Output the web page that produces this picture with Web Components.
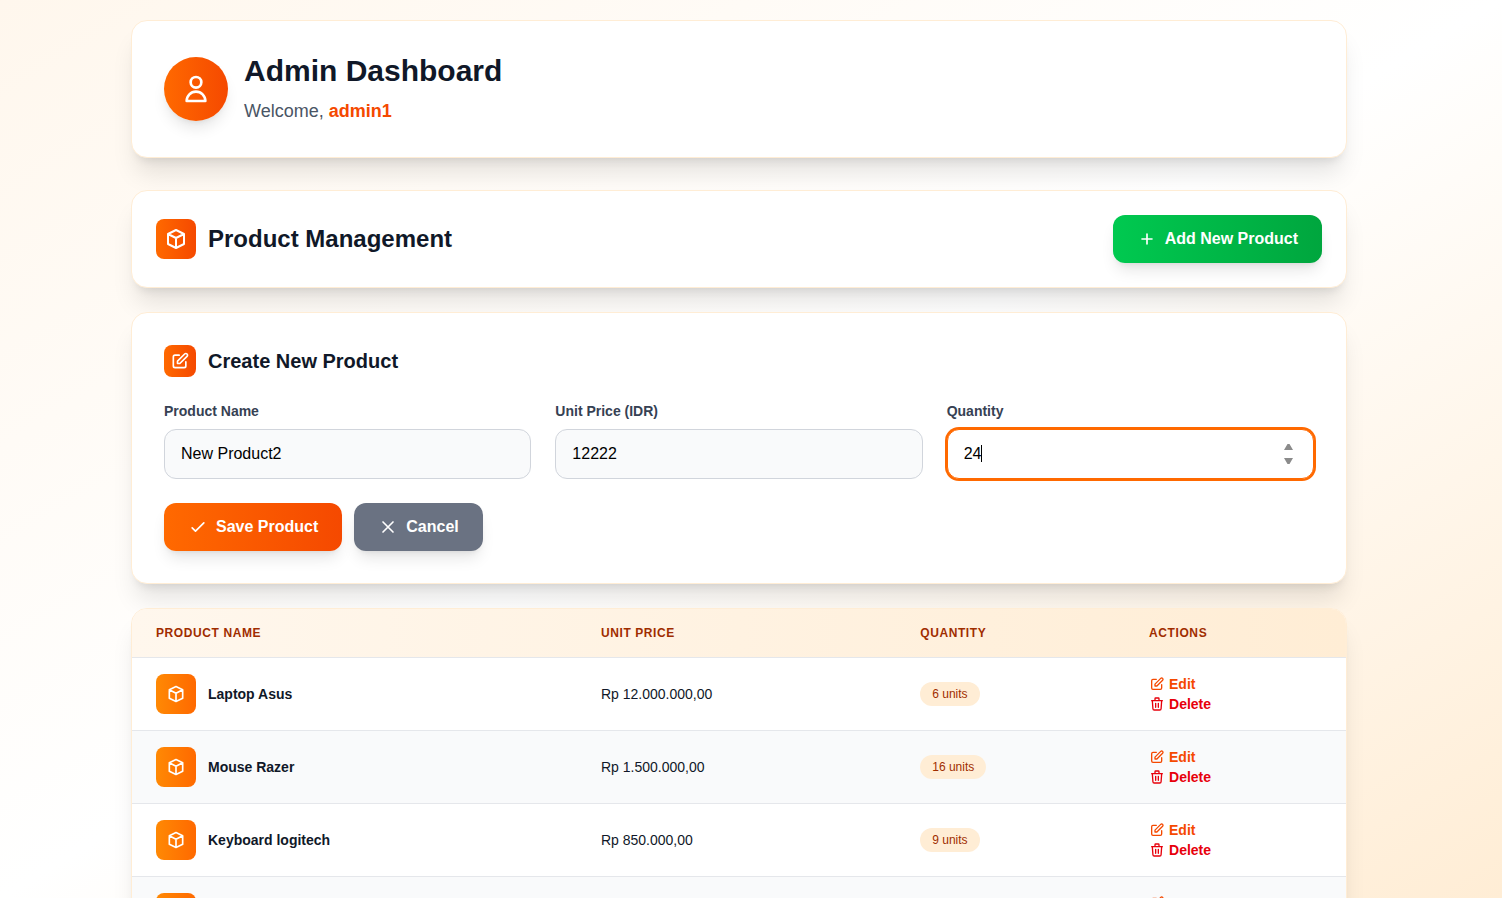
<!DOCTYPE html>
<html lang="en">
<head>
<meta charset="utf-8">
<meta name="viewport" content="width=device-width, initial-scale=1">
<title>Admin Dashboard</title>
<style>
  html {
    min-height: 100%;
    background: linear-gradient(to bottom right in oklab, #fff7ed, #ffffff, #ffedd5) fixed;
    --gray-50: #f9fafb;
    --gray-200: #e5e7eb;
    --gray-300: #d1d5dc;
    --gray-500: #6a7282;
    --gray-600: #4a5565;
    --gray-700: #364153;
    --gray-900: #101828;
    --orange-50: #fff7ed;
    --orange-100: #ffedd5;
    --orange-400: #ff8904;
    --orange-500: #ff6900;
    --orange-600: #f54900;
    --orange-800: #9f2d00;
    --red-600: #e7000b;
    --shadow-lg: 0 10px 15px -3px rgb(0 0 0 / .1), 0 4px 6px -4px rgb(0 0 0 / .1);
    --shadow-xl: 0 20px 25px -5px rgb(0 0 0 / .1), 0 8px 10px -6px rgb(0 0 0 / .1);
  }
  body {
    margin: 0;
    font: 16px/24px "Liberation Sans", Arial, sans-serif;
    color: var(--gray-900);
  }
</style>
</head>
<body>
<admin-dashboard></admin-dashboard>

<script>
const ICONS = {
  user: 'M16 7a4 4 0 11-8 0 4 4 0 018 0zM12 14a7 7 0 00-7 7h14a7 7 0 00-7-7z',
  cube: 'M20 7l-8-4-8 4m16 0l-8 4m8-4v10l-8 4m0-10L4 7m8 4v10M4 7v10l8 4',
  edit: 'M11 5H6a2 2 0 00-2 2v11a2 2 0 002 2h11a2 2 0 002-2v-5m-1.414-9.414a2 2 0 112.828 2.828L11.828 15H9v-2.828l8.586-8.586z',
  trash: 'M19 7l-.867 12.142A2 2 0 0116.138 21H7.862a2 2 0 01-1.995-1.858L5 7m5 4v6m4-6v6m1-10V4a1 1 0 00-1-1h-4a1 1 0 00-1 1v3M4 7h16',
  plus: 'M12 6v6m0 0v6m0-6h6m-6 0H6',
  check: 'M5 13l4 4L19 7',
  close: 'M6 18L18 6M6 6l12 12'
};

/* Base class: puts the element's markup in an open shadow root. */
class UiElement extends HTMLElement {
  connectedCallback() {
    if (this.shadowRoot) return;
    const template = document.createElement('template');
    template.innerHTML = '<style>*{box-sizing:border-box}</style>' + this.render();
    this.attachShadow({ mode: 'open' }).append(template.content.cloneNode(true));
  }
}

customElements.define('ui-icon', class extends UiElement {
  render() {
    return `
      <style>
        :host { display: block; flex: none; width: var(--size, 24px); height: var(--size, 24px); }
        svg { display: block; width: 100%; height: 100%; }
      </style>
      <svg viewBox="0 0 24 24" fill="none" stroke="currentColor" stroke-width="2"
           stroke-linecap="round" stroke-linejoin="round" aria-hidden="true">
        <path d="${ICONS[this.getAttribute('name')]}"/>
      </svg>`;
  }
});

/* Gradient tile with an icon in it. */
customElements.define('icon-tile', class extends UiElement {
  render() {
    return `
      <style>
        :host {
          display: flex; flex: none; align-items: center; justify-content: center;
          box-sizing: border-box; width: 40px; height: 40px; border-radius: 8px; color: #fff;
          background: linear-gradient(to right, var(--orange-500), var(--orange-600));
        }
        :host([variant="avatar"]) {
          width: 64px; height: 64px; border-radius: 50%; --size: 32px; box-shadow: var(--shadow-lg);
        }
        :host([variant="small"]) { width: 32px; height: 32px; --size: 20px; }
        :host([variant="light"]) {
          --size: 20px; background: linear-gradient(to right, var(--orange-400), var(--orange-500));
        }
      </style>
      <ui-icon name="${this.getAttribute('icon')}"></ui-icon>`;
  }
});

customElements.define('ui-card', class extends UiElement {
  render() {
    return `
      <style>
        :host {
          display: block; box-sizing: border-box; padding: 32px; background: #fff;
          border: 1px solid var(--orange-100); border-radius: 16px; box-shadow: var(--shadow-xl);
        }
        :host([padding="medium"]) { padding: 24px; }
        :host([padding="none"]) { padding: 0; overflow: hidden; }
      </style>
      <slot></slot>`;
  }
});

customElements.define('ui-button', class extends UiElement {
  render() {
    return `
      <style>
        :host { display: block; flex: none; }
        button {
          display: flex; align-items: center; gap: 8px; padding: 12px 24px; border: 0;
          border-radius: 12px; font: inherit; font-weight: 700; color: #fff; cursor: pointer;
          background: linear-gradient(to right, var(--orange-500), var(--orange-600));
          box-shadow: var(--shadow-lg); --size: 20px;
        }
        :host([variant="success"]) button { background: linear-gradient(to right, #00c950, #00a63e); }
        :host([variant="neutral"]) button { background: var(--gray-500); }
      </style>
      <button type="button">
        <ui-icon name="${this.getAttribute('icon')}"></ui-icon>
        <span><slot></slot></span>
      </button>`;
  }
});

customElements.define('form-field', class extends UiElement {
  render() {
    const active = this.hasAttribute('active');
    return `
      <style>
        :host { display: block; min-width: 0; }
        label { display: block; margin-bottom: 8px; font-size: 14px; line-height: 20px; font-weight: 700; color: var(--gray-700); }
        .box { position: relative; }
        input {
          display: block; width: 100%; height: 50px; margin: 0; padding: 12px 16px; font: inherit; color: #000;
          background: var(--gray-50); border: 1px solid var(--gray-300); border-radius: 12px;
          outline: 0; appearance: textfield;
        }
        input::-webkit-inner-spin-button { appearance: none; margin: 0; }
        :host([active]) input {
          background: #fff; border-color: var(--orange-500); box-shadow: 0 0 0 2px var(--orange-500);
        }
        .caret { position: absolute; left: 34px; top: 16px; width: 1px; height: 17px; background: #000; pointer-events: none; }
        .spin { position: absolute; right: 18px; top: 13px; width: 15px; height: 24px; fill: #8b8b8b; }
      </style>
      <label for="input">${this.getAttribute('label')}</label>
      <div class="box">
        <input id="input" type="${this.getAttribute('type') || 'text'}" value="${this.getAttribute('value')}">
        ${active ? `
          <svg class="spin" viewBox="0 0 15 24" aria-hidden="true"><path d="M3 8L6.500 2h2L12 8zM3 16h9l-3.500 6h-2z"/></svg>
          <div class="caret" aria-hidden="true"></div>` : ''}
      </div>`;
  }
});

customElements.define('product-table', class extends UiElement {
  render() {
    const products = [
      ['Laptop Asus', 'Rp 12.000.000,00', 6],
      ['Mouse Razer', 'Rp 1.500.000,00', 16],
      ['Keyboard logitech', 'Rp 850.000,00', 9],
      null /* row whose product has not loaded yet */
    ];
    const rows = products.map(product => {
      const [name, price, quantity] = product || ['', '', 0];
      return `
      <tr>
        <td><div class="name"><icon-tile icon="cube" variant="light"></icon-tile>${name}</div></td>
        <td>${price}</td>
        <td>${product ? `<span class="badge">${quantity} units</span>` : ''}</td>
        <td>
          <div class="actions">
            <button type="button" class="edit" aria-label="Edit"><ui-icon name="edit"></ui-icon>${product ? 'Edit' : ''}</button>
            <button type="button" class="delete" aria-label="Delete"><ui-icon name="trash"></ui-icon>${product ? 'Delete' : ''}</button>
          </div>
        </td>
      </tr>`;
    }).join('');
    return `
      <style>
        :host { display: block; }
        table { width: 100%; table-layout: fixed; border-collapse: separate; border-spacing: 0; font-size: 14px; line-height: 20px; }
        thead { background: linear-gradient(to right, var(--orange-50), var(--orange-100)); }
        th {
          padding: 16px 24px; text-align: left; font-size: 12px; line-height: 16px; font-weight: 700;
          letter-spacing: .05em; text-transform: uppercase; color: var(--orange-800);
        }
        td { padding: 16px 24px; border-top: 1px solid var(--gray-200); vertical-align: middle; }
        tbody tr { background: #fff; }
        tbody tr:nth-child(even) { background: var(--gray-50); }
        col:nth-child(1) { width: 36.65%; }
        col:nth-child(2) { width: 26.3%; }
        col:nth-child(3) { width: 18.85%; }
        .name { display: flex; align-items: center; gap: 12px; font-weight: 700; }
        .badge {
          display: inline-block; padding: 4px 12px; border-radius: 12px; vertical-align: middle;
          font-size: 12px; line-height: 16px; background: var(--orange-100); color: var(--orange-800);
        }
        .actions { display: flex; flex-direction: column; align-items: flex-start; --size: 16px; }
        .actions button {
          display: flex; align-items: center; gap: 4px; height: 20px; padding: 0; border: 0; background: none;
          font: inherit; font-weight: 700; cursor: pointer;
        }
        .actions .edit { color: var(--orange-600); }
        .actions .delete { color: var(--red-600); }
      </style>
      <table>
        <colgroup><col><col><col><col></colgroup>
        <thead><tr><th>Product Name</th><th>Unit Price</th><th>Quantity</th><th>Actions</th></tr></thead>
        <tbody>${rows}</tbody>
      </table>`;
  }
});

customElements.define('admin-dashboard', class extends UiElement {
  render() {
    return `
      <style>
        :host { display: block; padding: 20px 56px 32px 32px; }
        main { display: flex; flex-direction: column; gap: 24px; max-width: 1216px; margin: 0 auto; }
        h1, h2, h3, p { margin: 0; font-weight: 700; }
        h1 { font-size: 30px; line-height: 36px; }
        h2 { font-size: 24px; line-height: 32px; }
        h3 { font-size: 20px; line-height: 28px; }
        header { margin-bottom: 8px; }
        .profile { display: flex; align-items: center; gap: 16px; }
        .profile p { margin-top: 8px; font-size: 18px; line-height: 28px; font-weight: 400; color: var(--gray-600); }
        .profile strong { color: var(--orange-600); }
        .bar { display: flex; align-items: center; justify-content: space-between; }
        .title { display: flex; align-items: center; gap: 12px; }
        .fields { display: grid; grid-template-columns: repeat(3, minmax(0, 1fr)); gap: 24px; margin: 24px 0; }
        .buttons { display: flex; gap: 12px; }
      </style>
      <main>
        <header>
          <ui-card>
            <div class="profile">
              <icon-tile icon="user" variant="avatar"></icon-tile>
              <div>
                <h1>Admin Dashboard</h1>
                <p>Welcome, <strong>admin1</strong></p>
              </div>
            </div>
          </ui-card>
        </header>
        <ui-card padding="medium">
          <div class="bar">
            <div class="title"><icon-tile icon="cube"></icon-tile><h2>Product Management</h2></div>
            <ui-button icon="plus" variant="success">Add New Product</ui-button>
          </div>
        </ui-card>
        <ui-card>
          <form>
            <div class="title"><icon-tile icon="edit" variant="small"></icon-tile><h3>Create New Product</h3></div>
            <div class="fields">
              <form-field label="Product Name" value="New Product2"></form-field>
              <form-field label="Unit Price (IDR)" type="number" value="12222"></form-field>
              <form-field label="Quantity" type="number" value="24" active></form-field>
            </div>
            <div class="buttons">
              <ui-button icon="check">Save Product</ui-button>
              <ui-button icon="close" variant="neutral">Cancel</ui-button>
            </div>
          </form>
        </ui-card>
        <ui-card padding="none"><product-table></product-table></ui-card>
      </main>`;
  }
});
</script>
</body>
</html>
